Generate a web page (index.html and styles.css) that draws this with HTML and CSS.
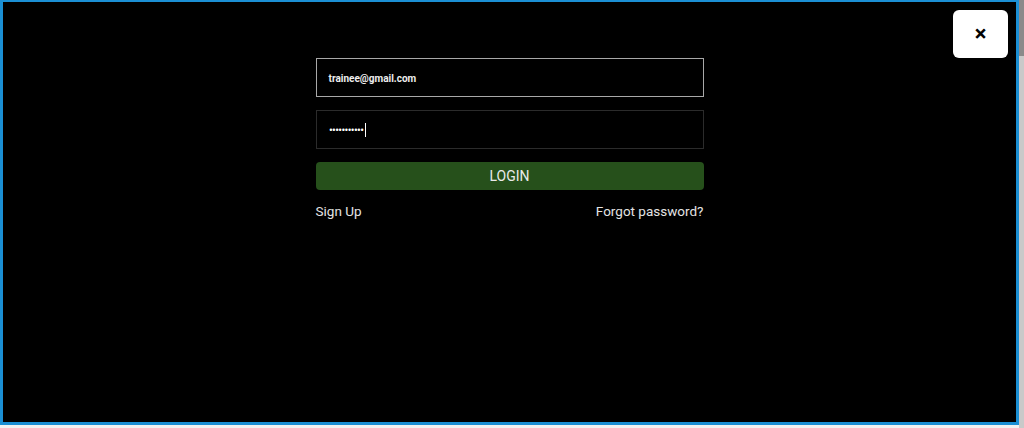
FILE: index.html
```html
<!DOCTYPE html>
<html>
<head>
<meta charset="utf-8">
<link rel="stylesheet" href="styles.css">
</head>
<body>
<div class="page">
  <div class="frame">
    <button class="close" aria-label="Close">&#x2715;</button>
    <form class="login">
      <div class="field field-active"><span class="value">trainee@gmail.com</span></div>
      <div class="field"><span class="dots">•••••••••••</span><span class="caret"></span></div>
      <button type="button" class="btn">LOGIN</button>
      <div class="links">
        <a class="link">Sign Up</a>
        <a class="link">Forgot password?</a>
      </div>
    </form>
  </div>
  <div class="scroll"><div class="thumb"></div></div>
</div>
</body>
</html>
```
FILE: styles.css
```css
html, body {
  margin: 0;
  padding: 0;
  background: #f2f2f2;
  font-family: Roboto, "Liberation Sans", sans-serif;
}
.page {
  display: flex;
  width: 1024px;
  height: 428px;
}
.frame {
  position: relative;
  box-sizing: border-box;
  width: 1019px;
  height: 425px;
  border: 3px solid #1b8fd4;
  border-top-width: 2px;
  background: #000;
  display: flex;
  justify-content: center;
}
.scroll {
  width: 5px;
  height: 428px;
  background: #c9c9c9;
}
.thumb {
  height: 56px;
  background: #8a8a8a;
}
.close {
  position: absolute;
  top: 8px;
  right: 8px;
  width: 55px;
  height: 48px;
  border: none;
  border-radius: 6px;
  background: #fff;
  color: #000;
  font-size: 15px;
  font-weight: 900;
  font-family: "DejaVu Sans", sans-serif;
  padding: 0;
  cursor: pointer;
  -webkit-text-stroke: 1px #000;
}
.login {
  width: 388px;
  margin: 0;
  padding-top: 56px;
  display: flex;
  flex-direction: column;
}
.field {
  box-sizing: border-box;
  height: 39px;
  border: 1px solid #2b2b2b;
  padding: 1px 12px 0;
  display: flex;
  align-items: center;
  margin-bottom: 13px;
  color: #fff;
}
.field-active {
  border-color: #a8a8a8;
}
.value {
  font-size: 10px;
  font-weight: 700;
  color: #eee;
}
.dots {
  font-size: 8px;
  letter-spacing: -1.6px;
  color: #fff;
  font-family: "DejaVu Sans", sans-serif;
}
.caret {
  display: inline-block;
  width: 1px;
  height: 14px;
  background: #fff;
  margin-left: 2px;
}
.btn {
  height: 28px;
  border: none;
  border-radius: 4px;
  background: #26501b;
  color: #eaeaea;
  font-family: Roboto, "Liberation Sans", sans-serif;
  font-size: 14px;
  padding: 0;
}
.links {
  display: flex;
  justify-content: space-between;
  margin-top: 13px;
  font-size: 13.5px;
  color: #e4e4e4;
}
.link {
  color: #e4e4e4;
}
```
